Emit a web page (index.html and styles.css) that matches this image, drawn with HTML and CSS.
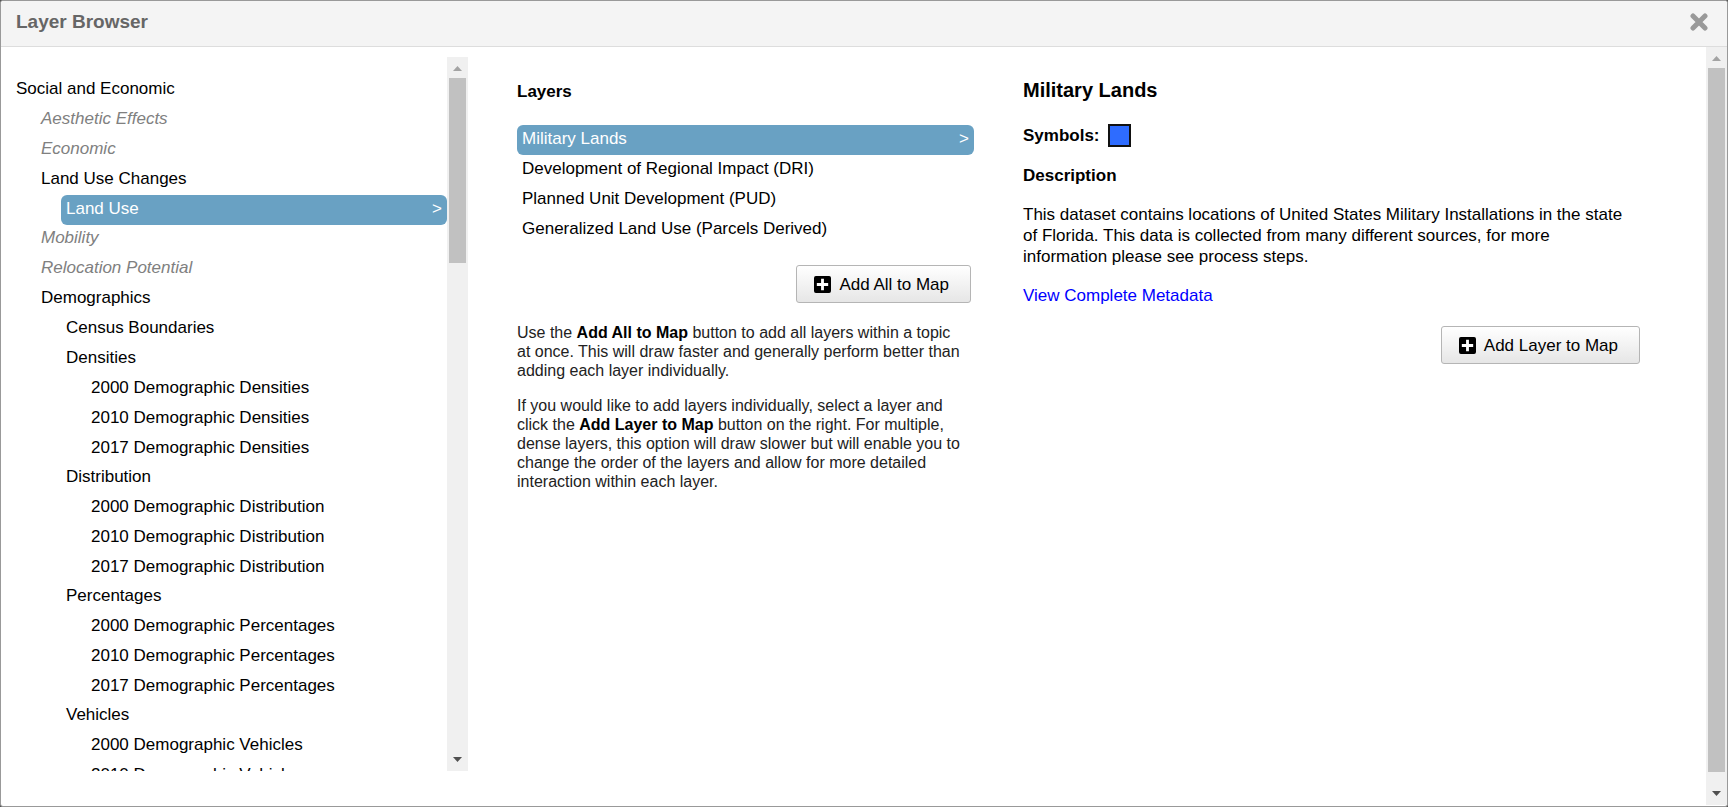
FILE: index.html
```html
<!DOCTYPE html>
<html lang="en">
<head>
<meta charset="utf-8">
<title>Layer Browser</title>
<link rel="stylesheet" href="styles.css">
</head>
<body>
<div class="dialog" role="dialog" aria-labelledby="dialog-title">
  <header class="dialog-header">
    <h1 class="dialog-title" id="dialog-title">Layer Browser</h1>
    <button class="close" type="button" aria-label="Close">
      <svg width="18" height="18" viewBox="0 0 18 18" aria-hidden="true"><path d="M3 3 15 15M15 3 3 15" fill="none" stroke="#999" stroke-width="5" stroke-linecap="round"/></svg>
    </button>
  </header>
  <div class="dialog-body">
    <main class="panels">
      <nav class="tree" aria-label="Topics">
        <div class="tree-view">
          <ul class="list">
            <li><button class="row" type="button">Social and Economic</button>
              <ul class="list nested">
                <li><button class="row" type="button" disabled>Aesthetic Effects</button></li>
                <li><button class="row" type="button" disabled>Economic</button></li>
                <li><button class="row" type="button">Land Use Changes</button>
                  <ul class="list nested">
                    <li><button class="row selected" type="button"><span>Land Use</span><span>&gt;</span></button></li>
                  </ul>
                </li>
                <li><button class="row" type="button" disabled>Mobility</button></li>
                <li><button class="row" type="button" disabled>Relocation Potential</button></li>
                <li><button class="row" type="button">Demographics</button>
                  <ul class="list nested">
                    <li><button class="row" type="button">Census Boundaries</button></li>
                    <li><button class="row" type="button">Densities</button>
                      <ul class="list nested">
                        <li><button class="row" type="button">2000 Demographic Densities</button></li>
                        <li><button class="row" type="button">2010 Demographic Densities</button></li>
                        <li><button class="row" type="button">2017 Demographic Densities</button></li>
                      </ul>
                    </li>
                    <li><button class="row" type="button">Distribution</button>
                      <ul class="list nested">
                        <li><button class="row" type="button">2000 Demographic Distribution</button></li>
                        <li><button class="row" type="button">2010 Demographic Distribution</button></li>
                        <li><button class="row" type="button">2017 Demographic Distribution</button></li>
                      </ul>
                    </li>
                    <li><button class="row" type="button">Percentages</button>
                      <ul class="list nested">
                        <li><button class="row" type="button">2000 Demographic Percentages</button></li>
                        <li><button class="row" type="button">2010 Demographic Percentages</button></li>
                        <li><button class="row" type="button">2017 Demographic Percentages</button></li>
                      </ul>
                    </li>
                    <li><button class="row" type="button">Vehicles</button>
                      <ul class="list nested">
                        <li><button class="row" type="button">2000 Demographic Vehicles</button></li>
                        <li><button class="row" type="button">2010 Demographic Vehicles</button></li>
                      </ul>
                    </li>
                  </ul>
                </li>
              </ul>
            </li>
          </ul>
        </div>
        <div class="scrollbar" aria-hidden="true">
          <svg class="arrow" viewBox="0 0 21 21"><path d="M6 14 10.500 9 15 14Z" fill="#a3a3a3"/></svg>
          <div class="track"><div class="thumb tree-thumb"></div></div>
          <svg class="arrow" viewBox="0 0 21 21"><path d="M6 7H15L10.500 12Z" fill="#505050"/></svg>
        </div>
      </nav>

      <section class="layers">
        <h2 class="heading">Layers</h2>
        <ul class="list layer-list">
          <li><button class="row selected" type="button"><span>Military Lands</span><span>&gt;</span></button></li>
          <li><button class="row" type="button">Development of Regional Impact (DRI)</button></li>
          <li><button class="row" type="button">Planned Unit Development (PUD)</button></li>
          <li><button class="row" type="button">Generalized Land Use (Parcels Derived)</button></li>
        </ul>
        <button class="action add-all" type="button">
          <svg width="17" height="17" viewBox="0 0 18 18" aria-hidden="true"><rect x="0" y="0" width="18" height="18" rx="2"/><path d="M9 3V15M3 9H15" fill="none" stroke="#fff" stroke-width="3"/></svg>
          Add All to Map
        </button>
        <div class="help">
          <p>Use the <strong>Add All to Map</strong> button to add all layers within a topic at once. This will draw faster and generally perform better than adding each layer individually.</p>
          <p>If you would like to add layers individually, select a layer and click the <strong>Add Layer to Map</strong> button on the right. For multiple, dense layers, this option will draw slower but will enable you to change the order of the layers and allow for more detailed interaction within each layer.</p>
        </div>
      </section>

      <section class="details">
        <h2 class="layer-name">Military Lands</h2>
        <h3 class="heading symbols">Symbols: <span class="swatch"></span></h3>
        <h3 class="heading">Description</h3>
        <p class="description">This dataset contains locations of United States Military Installations in the state of Florida. This data is collected from many different sources, for more information please see process steps.</p>
        <p><a class="link" href="#metadata">View Complete Metadata</a></p>
        <button class="action add-layer" type="button">
          <svg width="17" height="17" viewBox="0 0 18 18" aria-hidden="true"><rect x="0" y="0" width="18" height="18" rx="2"/><path d="M9 3V15M3 9H15" fill="none" stroke="#fff" stroke-width="3"/></svg>
          Add Layer to Map
        </button>
      </section>
    </main>
    <div class="scrollbar page-scrollbar" aria-hidden="true">
      <svg class="arrow" viewBox="0 0 21 21"><path d="M6 14 10.500 9 15 14Z" fill="#a3a3a3"/></svg>
      <div class="track"><div class="thumb page-thumb"></div></div>
      <svg class="arrow" viewBox="0 0 21 21"><path d="M6 7H15L10.500 12Z" fill="#505050"/></svg>
    </div>
  </div>
</div>
</body>
</html>
```
FILE: styles.css
```css
* { box-sizing: border-box; }

body {
  margin: 0;
  background: #555;
  color: #000;
  font: 17px/21px "Liberation Sans", Arial, sans-serif;
}

h1, h2, h3, p { margin: 0; }

button {
  font: inherit;
  color: inherit;
  cursor: pointer;
}

.dialog {
  display: flex;
  flex-direction: column;
  height: 100vh;
  border: 1px solid #999;
  border-radius: 3px;
  background: #fff;
  overflow: hidden;
}

.dialog-header {
  display: flex;
  align-items: center;
  justify-content: space-between;
  padding: 10px 19px 13px 15px;
  border-bottom: 1px solid #ddd;
  background: #f4f4f4;
}

.dialog-title {
  color: #666;
  font-size: 19px;
  line-height: 22px;
}

.close {
  display: flex;
  padding: 0;
  border: 0;
  background: none;
}

.dialog-body {
  display: flex;
  flex: 1;
  min-height: 0;
}

.panels {
  display: grid;
  flex: 1;
  grid-template-columns: 457fr 457fr 617fr;
  grid-template-rows: minmax(0, 1fr);
  gap: 49px;
  padding: 10px 66px 35px 10px;
}

.scrollbar {
  display: flex;
  flex: none;
  flex-direction: column;
  width: 21px;
  background: #f0f0f0;
}

.page-scrollbar { margin-bottom: 1px; }

.arrow { height: 21px; flex: none; }

.track {
  flex: 1;
  min-height: 0;
  padding: 0 2px;
}

.thumb { background: #c1c1c1; }
.tree-thumb { height: 27.5%; }
.page-thumb { height: 98.3%; }

.tree { display: flex; min-height: 0; }

.tree-view {
  flex: 1;
  padding-top: 18px;
  overflow: hidden;
}

.list {
  margin: 0;
  padding: 0;
  list-style: none;
}

.nested {
  margin-bottom: -1px;
  padding-left: 25px;
}

.row {
  display: flex;
  justify-content: space-between;
  width: 100%;
  padding: 3px 5px 6px;
  border: 0;
  border-radius: 6px;
  background: none;
  text-align: left;
}

.row:disabled {
  color: #808080;
  font-style: italic;
  cursor: default;
}

.selected {
  background: #69a1c3;
  color: #fff;
}

.heading { font-size: 17px; }

.layers {
  display: flex;
  flex-direction: column;
  padding-top: 24px;
}

.layer-list { margin-top: 23px; }

.action {
  display: flex;
  align-items: center;
  align-self: flex-end;
  gap: 8px;
  height: 38px;
  padding: 0 21px 0 17px;
  border: 1px solid #b5b5b5;
  border-radius: 3px;
  background: linear-gradient(#fff, #e6e6e6);
}

.add-all { margin: 20px 3px 0 0; }
.add-layer { margin-top: 2px; }

.help {
  display: flex;
  flex-direction: column;
  gap: 16px;
  margin-top: 20px;
  padding-right: 8px;
  color: #222;
  font-size: 16px;
  line-height: 19px;
}

.help strong { color: #000; }

.details {
  display: flex;
  flex-direction: column;
  gap: 18px;
  padding-top: 21px;
}

.layer-name {
  margin-bottom: 4px;
  font-size: 20px;
  line-height: 24px;
}

.symbols {
  display: flex;
  align-items: center;
  gap: 8px;
}

.swatch {
  width: 23px;
  height: 23px;
  border: 2px solid #111;
  background: #2e6cff;
}

.description { padding-right: 10px; }

.link { color: #00f; text-decoration: none; }
```
